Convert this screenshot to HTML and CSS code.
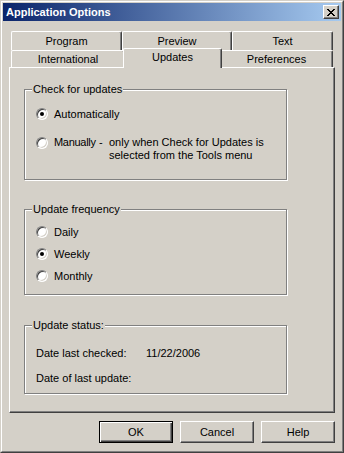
FILE: index.html
```
<!DOCTYPE html>
<html lang="en">
<head>
    <meta charset="UTF-8">
    <meta name="viewport" content="width=device-width, initial-scale=1.0">
    <title>Application Options</title>
    <link rel="stylesheet" href="styles.css">
</head>
<body>
    <div class="window">
        <div class="frame">
            <div class="titlebar">
                <span class="title">Application Options</span>
                <button class="close" type="button">
                    <svg width="8" height="7" viewBox="0 0 8 7" shape-rendering="crispEdges">
                        <path fill="#000" d="M0 0h2v1H0z M6 0h2v1H6z M1 1h2v1H1z M5 1h2v1H5z M2 2h4v1H2z M3 3h2v1H3z M2 4h4v1H2z M1 5h2v1H1z M5 5h2v1H5z M0 6h2v1H0z M6 6h2v1H6z"/>
                    </svg>
                </button>
            </div>

            <div class="content">
                <div class="tabs">
                    <div class="tab-row back">
                        <div class="tab tab-program">Program</div>
                        <div class="tab tab-preview">Preview</div>
                        <div class="tab tab-text">Text</div>
                    </div>
                    <div class="tab-row front">
                        <div class="tab tab-intl">International</div>
                        <div class="tab tab-updates selected">Updates</div>
                        <div class="tab tab-prefs">Preferences</div>
                    </div>
                </div>

                <div class="panel">
                    <fieldset class="group group-check">
                        <legend>Check for updates</legend>
                        <div class="group-body">
                            <div class="option opt-auto"><span class="radio checked"></span>Automatically</div>
                            <div class="option opt-manual">
                                <span class="radio"></span>
                                <span class="manual-label">Manually</span>
                                <span class="dash">-</span>
                                <span class="note">only when Check for Updates is<br>selected from the Tools menu</span>
                            </div>
                        </div>
                    </fieldset>

                    <fieldset class="group group-freq">
                        <legend>Update frequency</legend>
                        <div class="group-body">
                            <div class="option opt-daily"><span class="radio"></span>Daily</div>
                            <div class="option opt-weekly"><span class="radio checked"></span>Weekly</div>
                            <div class="option opt-monthly"><span class="radio"></span>Monthly</div>
                        </div>
                    </fieldset>

                    <fieldset class="group group-status">
                        <legend>Update status:</legend>
                        <div class="group-body">
                            <div class="status-row first">
                                <span class="status-label">Date last checked:</span>
                                <span class="status-value">11/22/2006</span>
                            </div>
                            <div class="status-row">
                                <span class="status-label">Date of last update:</span>
                                <span class="status-value"></span>
                            </div>
                        </div>
                    </fieldset>
                </div>

                <div class="buttons">
                    <button class="btn default" type="button">OK</button>
                    <button class="btn" type="button">Cancel</button>
                    <button class="btn" type="button">Help</button>
                </div>
            </div>
        </div>
    </div>
</body>
</html>
```

FILE: styles.css
```
* {
    box-sizing: border-box;
}

body {
    margin: 0;
    background-color: #d4d0c8;
    font-family: "Liberation Sans", Arial, sans-serif;
    font-size: 11px;
    line-height: 13px;
    color: #000;
}

.window {
    width: 344px;
    height: 453px;
    background-color: #d4d0c8;
    border: 1px solid;
    border-color: #d4d0c8 #404040 #404040 #d4d0c8;
}

.frame {
    height: 100%;
    border: 1px solid;
    border-color: #fff #808080 #808080 #fff;
    padding: 1px;
}

/* title bar */
.titlebar {
    height: 18px;
    display: flex;
    align-items: center;
    justify-content: space-between;
    padding-left: 3px;
    background: linear-gradient(to right, #0a246a, #a6caf0);
}

.title {
    color: #fff;
    font-weight: bold;
    font-size: 11px;
}

.close {
    width: 16px;
    height: 14px;
    margin-right: 2px;
    padding: 0;
    display: flex;
    align-items: center;
    justify-content: center;
    background-color: #d4d0c8;
    border: 1px solid;
    border-color: #fff #404040 #404040 #fff;
    box-shadow: inset -1px -1px 0 #808080;
}

.close svg {
    display: block;
}

/* dialog body */
.content {
    padding: 10px 5px 0 6px;
}

.tabs {
    padding: 0 2px;
}

.tab-row {
    display: flex;
    align-items: flex-start;
}

.tab {
    text-align: center;
    background-color: #d4d0c8;
    border-top: 1px solid #fff;
    border-left: 1px solid #fff;
    border-right: 1px solid #404040;
    border-radius: 2px 2px 0 0;
    box-shadow: inset -1px 0 0 #808080;
}

.back .tab {
    height: 19px;
    line-height: 18px;
}

.front .tab {
    height: 17px;
    line-height: 17px;
}

.tab-program { width: 111px; }
.tab-preview { width: 110px; }
.tab-text { width: 101px; }
.tab-intl { width: 114px; }
.tab-updates { width: 95px; }
.tab-prefs { width: 113px; }

.front .tab.selected {
    position: relative;
    z-index: 1;
    width: 99px;
    height: 20px;
    line-height: 16px;
    margin: -2px -2px -1px -2px;
    box-shadow: inset -1px 0 0 #808080;
}

.panel {
    width: 326px;
    height: 346px;
    border: 1px solid;
    border-color: #fff #404040 #404040 #fff;
    box-shadow: inset -1px -1px 0 #808080;
    padding: 15px 0 0 14px;
}

/* group boxes */
.group {
    width: 263px;
    margin: 0;
    padding: 0;
    min-width: 0;
    border: 1px solid #808080;
    box-shadow: 1px 1px 0 #fff, inset 1px 1px 0 #fff;
}

.group + .group {
    margin-top: 23px;
}

.group-status {
    margin-top: 24px !important;
}

.group legend {
    margin-left: 7px;
    padding: 0 1px;
    line-height: 13px;
    background-color: #d4d0c8;
}

.group-body {
    padding-left: 11px;
}

.group-check .group-body { padding-bottom: 17px; }
.group-freq .group-body { padding-bottom: 10px; }
.group-status .group-body { padding-bottom: 7px; }

.option {
    display: flex;
    align-items: center;
    height: 16px;
}

.opt-auto { margin-top: 10px; }
.opt-manual {
    margin-top: 14px;
    height: 26px;
    align-items: flex-start;
}
.opt-manual .radio { margin-top: 1px; }
.opt-daily { margin-top: 8px; }
.opt-weekly,
.opt-monthly { margin-top: 6px; }

.radio {
    position: relative;
    flex: none;
    width: 12px;
    height: 12px;
    margin-right: 6px;
    border-radius: 50%;
    border: 1px solid;
    border-color: #808080 #fff #fff #808080;
    background-color: #fff;
    box-shadow: inset 1px 1px 0 #404040, inset -1px -1px 0 #d4d0c8;
}

.radio.checked::after {
    content: "";
    position: absolute;
    left: 3px;
    top: 3px;
    width: 4px;
    height: 4px;
    border-radius: 50%;
    background-color: #000;
}

.manual-label {
    width: 45px;
    letter-spacing: -0.3px;
}

.dash {
    width: 10px;
}

/* status rows */
.status-row {
    display: flex;
    align-items: center;
    height: 16px;
    margin-top: 9px;
}

.status-row.first {
    margin-top: 13px;
}

.status-label {
    width: 110px;
}

/* buttons */
.buttons {
    display: flex;
    justify-content: flex-end;
    gap: 7px;
    margin-top: 8px;
    padding-right: 1px;
}

.btn {
    width: 74px;
    height: 22px;
    padding: 0;
    font-family: "Liberation Sans", Arial, sans-serif;
    font-size: 11px;
    color: #000;
    background-color: #d4d0c8;
    border: 1px solid;
    border-color: #fff #404040 #404040 #fff;
    box-shadow: inset -1px -1px 0 #808080;
}

.btn.default {
    border-color: #000;
    box-shadow: inset 1px 1px 0 #fff, inset -1px -1px 0 #404040, inset -2px -2px 0 #808080;
}
```
